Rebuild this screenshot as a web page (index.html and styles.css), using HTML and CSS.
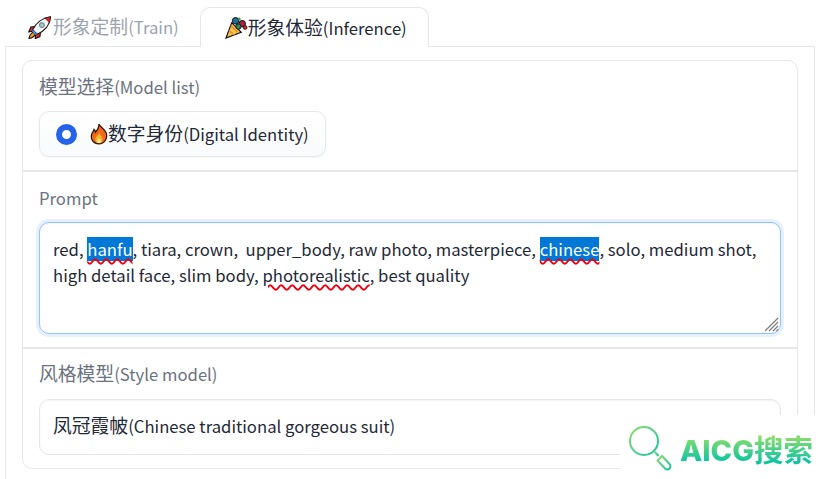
FILE: index.html
```html
<!DOCTYPE html>
<html lang="zh">
<head>
<meta charset="utf-8">
<title>形象体验</title>
<link rel="stylesheet" href="styles.css">
</head>
<body>
<div class="app">
  <nav class="tabs">
    <button class="tab">
      <svg class="emoji" viewBox="0 0 24 24"><path d="M7.500 11 3 11.500 .8 16.500l5-.5z" fill="#e0262c" stroke="#111" stroke-width="1.100"/><path d="M13 17l-.5 4.500-5 2.200.5-5z" fill="#e0262c" stroke="#111" stroke-width="1.100"/><path d="M5.500 17c-2.500 1-4 3.500-4.500 6.500 3-.5 5.500-2 6.500-4.500z" fill="#f6a21a" stroke="#111" stroke-width="1.100"/><path d="M5 14.500C8 7.500 15 2 23.500 .8 23 9 17.500 16 9.500 19z" fill="#f2f5f8" stroke="#111" stroke-width="1.100"/><path d="M17.500 2.200 23.500 .8 22.500 7z" fill="#e0262c" stroke="#111" stroke-width=".6"/><path d="M5.200 14.300 9.700 18.800 7.800 19.800 4.200 16.200z" fill="#2f8fe6"/><circle cx="14.500" cy="9.500" r="2.600" fill="#9cc7c9" stroke="#5f7077" stroke-width=".9"/></svg>
      <span><span class="cn">形象定制</span>(Train)</span>
    </button>
    <button class="tab active">
      <svg class="emoji" viewBox="0 0 24 24"><path d="M1 23 7 7l10 10z" fill="#f7c24a" stroke="#111" stroke-width="1.200"/><path d="M4 15l6 5M6 10l7 7" stroke="#e8892b" stroke-width="1.400"/><circle cx="11" cy="5" r="3.400" fill="#1f6f9e" stroke="#111"/><circle cx="18" cy="8" r="3.400" fill="#a3243f" stroke="#111"/><circle cx="14" cy="11" r="2.800" fill="#2e8b57" stroke="#111"/><circle cx="21" cy="12" r="2" fill="#d8232a" stroke="#111" stroke-width=".8"/><circle cx="15" cy="3" r="1.400" fill="#3f9a4b"/></svg>
      <span><span class="cn">形象体验</span>(Inference)</span>
    </button>
  </nav>
  <main class="panel">
    <div class="box">
      <section class="block">
        <div class="label"><span class="cn">模型选择</span>(Model list)</div>
        <label class="chip">
          <span class="radio"></span>
          <span class="chip-text">
            <svg class="fire" viewBox="0 0 20 24"><path d="M10 1c1 3 6 5 8 10 2 6-2 12-8 12S0 18 2 12c.5-2 2-3 2.500-5 1 1 1.500 2 1.500 3 2-2 4-5 4-9z" fill="#f4691e" stroke="#2a1408" stroke-width="1.400"/><path d="M10 11c1 2 4 4 4 7 0 3-2 4-4 4s-4-1-4-4c0-3 3-4 4-7z" fill="#fbb62c"/><path d="M10 17c.8 1 2 2 2 3s-1 2-2 2-2-1-2-2 1-2 2-3z" fill="#fdeb9a"/></svg>
            <span><span class="cn">数字身份</span>(Digital Identity)</span>
          </span>
        </label>
      </section>
      <div class="divider"></div>
      <section class="block">
        <div class="label">Prompt</div>
        <div class="prompt">red, <span class="sel">hanfu</span>, tiara, crown,  upper_body, raw photo, masterpiece, <span class="sel">chinese</span>, solo, medium shot, high detail face, slim body, <span class="typo">photorealistic</span>, best quality<svg class="grip" viewBox="0 0 15 15"><path d="M1 14 14 1M5 14l9-9M9 14l5-5M12.500 14l1.500-1.500" stroke="#7d7d7d" stroke-width="1.200" fill="none"/></svg></div>
      </section>
      <div class="divider"></div>
      <section class="block block-tight">
        <div class="label"><span class="cn">风格模型</span>(Style model)</div>
        <div class="select"><span><span class="cn">凤冠霞帔</span>(Chinese traditional gorgeous suit)</span></div>
      </section>
    </div>
  </main>
</div>
<aside class="mark">
  <svg class="lens" viewBox="0 0 46 46">
    <defs><linearGradient id="lg" x1="0" y1="0" x2="1" y2="1"><stop offset="0" stop-color="#8edc6c"/><stop offset="1" stop-color="#12c4a0"/></linearGradient></defs>
    <circle cx="15" cy="15" r="14" fill="none" stroke="url(#lg)" stroke-width="2"/>
    <path d="M25.500 25.500l4 4.500" stroke="url(#lg)" stroke-width="2"/>
    <path d="M33 30l7.500 8a3 3 0 0 1-4.500 4.500L28.500 34.500z" fill="none" stroke="url(#lg)" stroke-width="2"/>
  </svg>
  <span class="mark-text"><span class="mark-latin">AICG</span>搜索</span>
</aside>
</body>
</html>
```
FILE: styles.css
```css
* { box-sizing: border-box; }
html, body { margin: 0; height: 100%; overflow: hidden; background: #fff; }
body {
  position: relative;
  font-family: "Noto Sans CJK SC", "Noto Sans", sans-serif;
  font-size: 16.7px;
  color: #1f2937;
}
.cn { font-size: 18.8px; line-height: 1; }
.app { padding: 7px 5px 0; width: 820px; }
.tabs { display: flex; height: 39px; position: relative; z-index: 1; }
.tab {
  display: flex;
  align-items: center;
  gap: 2px;
  height: 39px;
  padding: 0 20px 0 22px;
  background: none;
  border: 1px solid transparent;
  border-bottom: 0;
  font: inherit;
  color: #9ca3af;
}
.tab.active {
  gap: 0;
  padding: 0 21px 0 24px;
  height: 40px;
  background: #fff;
  border-color: #e5e7eb;
  border-radius: 10px 10px 0 0;
  color: #1f2937;
}
.emoji { width: 23px; height: 23px; flex: none; }
.panel { border: 1px solid #e5e7eb; padding: 13px 16px; width: 810px; height: 440px; }
.box { border: 1px solid #e5e7eb; border-radius: 10px; width: 776px; }
.block { padding: 15px 16px 13px; }
.divider { height: 2px; background: #e5e7eb; }
.label { line-height: 22px; height: 22px; color: #6b7280; margin-bottom: 13px; }
.block-tight { padding-top: 14px; }
.block-tight .label { margin-bottom: 14px; }
.chip {
  display: inline-flex;
  align-items: center;
  gap: 13px;
  height: 46px;
  width: 287px;
  padding: 0 16px;
  border: 1px solid #e5e7eb;
  border-radius: 10px;
  background: linear-gradient(to bottom, #fff, #f9fafb);
  box-shadow: 0 1px 2px rgba(0, 0, 0, .04);
  vertical-align: top;
}
.radio {
  width: 21px;
  height: 21px;
  flex: none;
  border-radius: 50%;
  border: 6px solid #2563eb;
  background: #fff;
}
.chip-text { display: flex; align-items: center; white-space: nowrap; }
.fire { width: 18px; height: 22px; flex: none; }
.prompt {
  position: relative;
  height: 112px;
  padding: 13px 13px;
  border: 1px solid #93c5fd;
  border-radius: 10px;
  box-shadow: 0 0 0 3px #e6f0fe, inset 0 1px 2px rgba(0, 0, 0, .04);
  line-height: 26px;
  white-space: pre-wrap;
  background: #fff;
}
.sel {
  background: #0078d7;
  color: #fff;
  text-decoration: underline wavy #f0000f 1.500px;
  text-underline-offset: 2px;
}
.typo {
  text-decoration: underline wavy #f0000f 1.500px;
  text-underline-offset: 2px;
}
.grip { position: absolute; right: 1px; bottom: 1px; width: 15px; height: 15px; }
.select {
  height: 56px;
  padding: 0 13px 2px;
  display: flex;
  align-items: center;
  border: 1px solid #e5e7eb;
  border-radius: 10px;
  box-shadow: inset 0 1px 2px rgba(0, 0, 0, .05);
  background: #fff;
}
.mark {
  position: absolute;
  left: 620px;
  top: 415px;
  width: 200px;
  height: 64px;
  background: #fff;
  display: flex;
  align-items: flex-start;
  padding: 11px 0 0 9px;
  gap: 5px;
}
.lens { width: 46px; height: 46px; flex: none; }
.mark-text {
  margin-top: 7px;
  font-family: "Noto Sans CJK SC", sans-serif;
  font-weight: 700;
  font-size: 29.500px;
  line-height: 30px;
  white-space: nowrap;
  background: linear-gradient(to bottom, #86dc6e 15%, #10c4a2 85%);
  -webkit-background-clip: text;
  background-clip: text;
  color: transparent;
}
.mark-latin { font-family: Inter, sans-serif; font-weight: 800; font-size: 29px; letter-spacing: 0; }
```
